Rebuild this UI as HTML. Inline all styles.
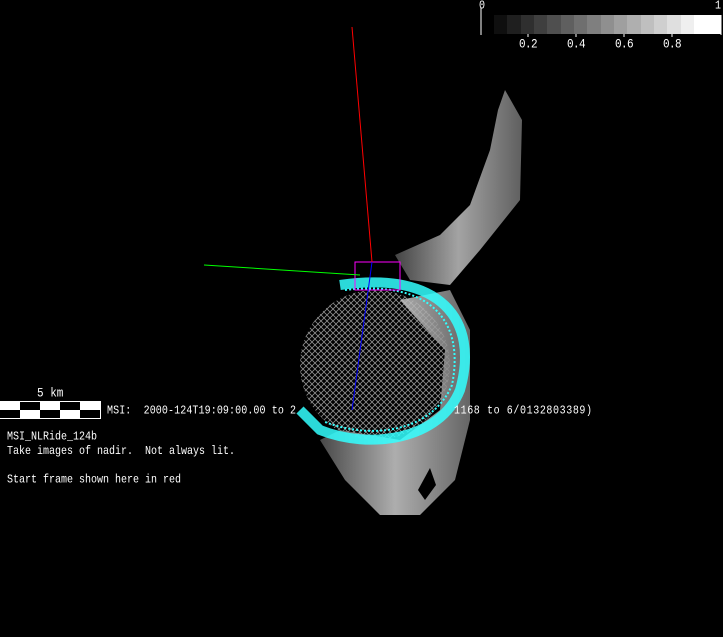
<!DOCTYPE html><html><head><style>
body{margin:0;background:#000;width:723px;height:637px;overflow:hidden;position:relative;font-family:"Liberation Mono",monospace;color:#fff;font-size:10px}
.t{position:absolute;white-space:pre;line-height:12px;transform:scaleY(1.2);transform-origin:0 0}
</style></head><body>
<svg width="723" height="637" style="position:absolute;left:0;top:0">
<defs>
<pattern id="m" width="6" height="6" patternUnits="userSpaceOnUse"><rect width="6" height="6" fill="#000"/><path d="M0 0L6 6M6 0L0 6" stroke="#ccc" stroke-width="0.8"/></pattern>
<linearGradient id="g" x1="0" y1="0" x2="1" y2="0"><stop offset="0" stop-color="#555"/><stop offset="0.5" stop-color="#ccc"/><stop offset="1" stop-color="#777"/></linearGradient>
</defs>
<path d="M505 90 L522 120 L520 200 L480 250 L450 285 L410 280 L395 255 L440 235 L470 205 L490 150 L498 110Z" fill="url(#g)" opacity="0.8"/>
<ellipse cx="375" cy="365" rx="75" ry="75" fill="url(#m)" opacity="0.7"/>
<path d="M400 300 L450 290 L470 330 L470 420 L455 480 L420 515 L380 515 L345 480 L320 440 L340 430 L400 440 L440 410 L445 350Z" fill="url(#g)" opacity="0.85"/>
<path d="M418 490 L430 468 L436 485 L425 500Z" fill="#000"/>
<path d="M340 285 C440 270 480 320 460 390 C440 440 370 450 320 430 L300 410" fill="none" stroke="#3ff" stroke-width="10" opacity="0.85"/>
<path d="M345 290 C430 280 465 320 452 385 C432 432 372 440 325 422" fill="none" stroke="#3ff" stroke-width="2" stroke-dasharray="2 2"/>
<path d="M355 262 L400 262 L400 290 L355 290Z" fill="none" stroke="#f0f" stroke-width="1"/>
<line x1="352" y1="27" x2="372" y2="262" stroke="#f00"/>
<line x1="204" y1="265" x2="360" y2="275" stroke="#0f0"/>
<line x1="372" y1="262" x2="352" y2="410" stroke="#00f"/>
<line x1="481" y1="8" x2="481" y2="35" stroke="#fff"/>
<line x1="721" y1="15" x2="721" y2="35" stroke="#fff"/>
<g>
<rect x="494" y="15" width="14" height="19" fill="#0f0f0f"/><rect x="507" y="15" width="14" height="19" fill="#1f1f1f"/><rect x="521" y="15" width="14" height="19" fill="#2f2f2f"/><rect x="534" y="15" width="14" height="19" fill="#3f3f3f"/><rect x="547" y="15" width="14" height="19" fill="#4f4f4f"/><rect x="561" y="15" width="14" height="19" fill="#5f5f5f"/><rect x="574" y="15" width="14" height="19" fill="#6f6f6f"/><rect x="587" y="15" width="14" height="19" fill="#7f7f7f"/><rect x="601" y="15" width="14" height="19" fill="#8f8f8f"/><rect x="614" y="15" width="14" height="19" fill="#9f9f9f"/><rect x="627" y="15" width="14" height="19" fill="#afafaf"/><rect x="641" y="15" width="14" height="19" fill="#bfbfbf"/><rect x="654" y="15" width="14" height="19" fill="#cfcfcf"/><rect x="667" y="15" width="14" height="19" fill="#dfdfdf"/><rect x="681" y="15" width="14" height="19" fill="#efefef"/><rect x="694" y="15" width="27" height="19" fill="#fff"/>
</g>
<g stroke="#fff"><line x1="528" y1="34" x2="528" y2="37"/><line x1="576" y1="34" x2="576" y2="37"/><line x1="624" y1="34" x2="624" y2="37"/><line x1="672" y1="34" x2="672" y2="37"/></g>
<rect x="0.5" y="401.5" width="100" height="17" fill="#fff" stroke="#fff"/>
<g fill="#000"><rect x="20" y="402" width="20" height="8"/><rect x="60" y="402" width="20" height="8"/><rect x="0" y="410" width="20" height="8"/><rect x="40" y="410" width="20" height="8"/><rect x="80" y="410" width="20" height="8"/></g>
</svg>
<div class="t" style="left:479px;top:0px">0</div>
<div class="t" style="left:715px;top:0px">1</div>
<div class="t" style="left:519px;top:38px;font-size:11px;letter-spacing:-0.6px">0.2     0.4     0.6     0.8</div>
<div class="t" style="left:37px;top:387px;font-size:11px">5 km</div>
<div class="t" style="left:107px;top:405px;letter-spacing:0.1px">MSI:  2000-124T19:09:00.00 to 2</div>
<div class="t" style="left:454px;top:405px;letter-spacing:0.6px">1168 to 6/0132803389)</div>
<div class="t" style="left:7px;top:431px;line-height:12px">MSI_NLRide_124b
Take images of nadir.  Not always lit.

Start frame shown here in red</div>
</body></html>
